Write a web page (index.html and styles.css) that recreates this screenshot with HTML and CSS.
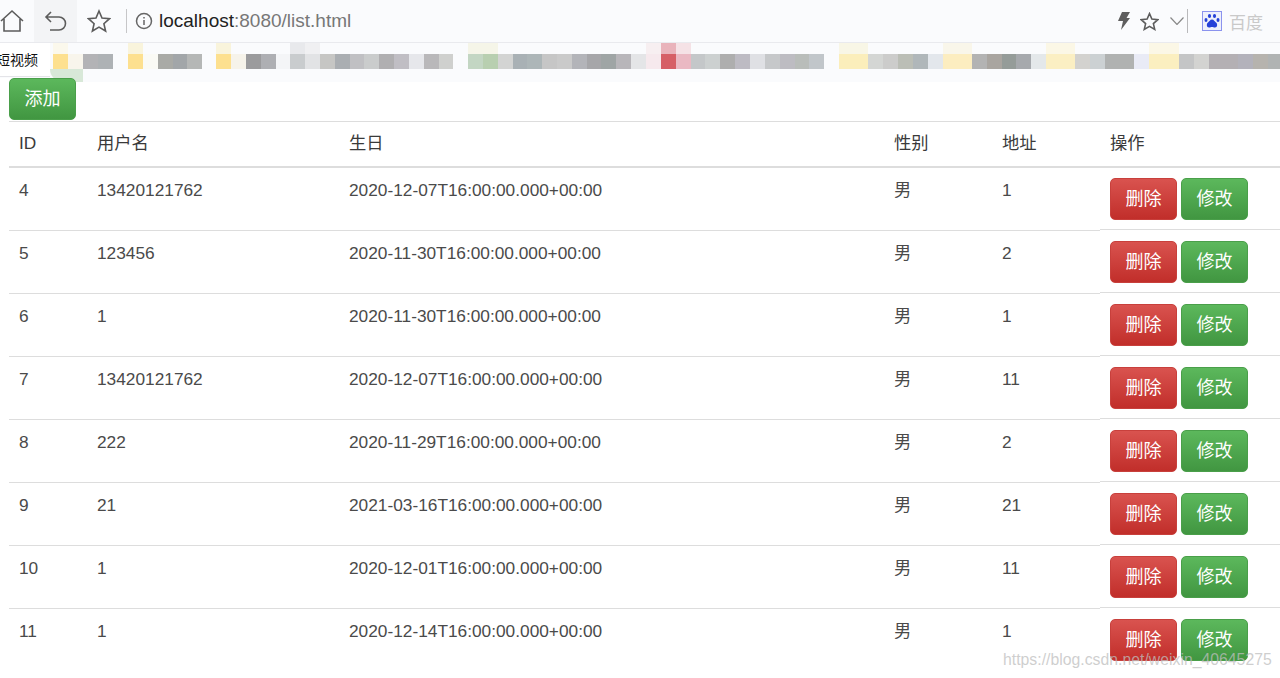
FILE: index.html
```html
<!DOCTYPE html>
<html lang="en">
<head>
    <meta charset="UTF-8">
    <meta name="viewport" content="width=device-width, initial-scale=1.0">
    <title>list</title>
    <link rel="stylesheet" href="styles.css">
</head>
<body>
    <header class="toolbar">
        <svg class="icon home" viewBox="0 0 24 24"><path d="M1 12 12 2l11 10M4 10v12h16V10"/></svg>
        <div class="back-box">
            <svg class="icon" viewBox="0 0 24 24"><path d="M7 3 2 8l5 5M2 8h13a6.500 6.500 0 0 1 0 13H6"/></svg>
        </div>
        <svg class="icon star" viewBox="0 0 24 24"><path d="m12 2 3 7 7.500.7-5.600 5 1.700 7.300-6.600-3.900L5.400 22l1.700-7.300-5.600-5L9 9z"/></svg>
        <span class="divider"></span>
        <svg class="info" viewBox="0 0 18 18"><circle cx="9" cy="9" r="7.500"/><path d="M9 8v5M9 5v1.600"/></svg>
        <div class="url">localhost<span class="url-rest">:8080/list.html</span></div>
        <svg class="bolt" viewBox="0 0 12 18"><path d="M4 0h8L8.500 6H12L3 18l2-9H0z"/></svg>
        <svg class="icon star-small" viewBox="0 0 24 24"><path d="m12 2 3 7 7.500.7-5.600 5 1.700 7.300-6.600-3.900L5.400 22l1.700-7.300-5.600-5L9 9z"/></svg>
        <svg class="chevron" viewBox="0 0 14 8"><path d="m.5.500 6.500 7 6.500-7"/></svg>
        <span class="divider divider-right"></span>
        <svg class="baidu" viewBox="0 0 20 20">
            <rect x=".5" y=".5" width="19" height="19"/>
            <ellipse class="paw" cx="7.500" cy="5" rx="1.600" ry="2.100"/>
            <ellipse class="paw" cx="12.500" cy="5" rx="1.600" ry="2.100"/>
            <ellipse class="paw" cx="4" cy="9" rx="1.500" ry="2"/>
            <ellipse class="paw" cx="16" cy="9" rx="1.500" ry="2"/>
            <path class="paw" d="M10 8.500c2 0 2.500 2 4 3 1.800 1.300 1.500 5-1 5-1.300 0-2-.5-3-.5s-1.700.5-3 .5c-2.500 0-2.800-3.700-1-5 1.500-1 2-3 4-3z"/>
        </svg>
        <span class="search-name">百度</span>
    </header>

    <div class="bookmarks">
        <span class="bm-label">短视频</span>
    </div>

    <main class="page">
        <button class="btn btn-green btn-add">添加</button>
        <table class="list">
            <thead>
                <tr>
                    <th class="col-id">ID</th>
                    <th class="col-name">用户名</th>
                    <th class="col-birth">生日</th>
                    <th class="col-sex">性别</th>
                    <th class="col-addr">地址</th>
                    <th>操作</th>
                </tr>
            </thead>
            <tbody>
                <tr>
                    <td>4</td><td>13420121762</td><td>2020-12-07T16:00:00.000+00:00</td><td>男</td><td>1</td>
                    <td class="ops"><div class="ops-btns"><button class="btn btn-red">删除</button><button class="btn btn-green">修改</button></div></td>
                </tr>
                <tr>
                    <td>5</td><td>123456</td><td>2020-11-30T16:00:00.000+00:00</td><td>男</td><td>2</td>
                    <td class="ops"><div class="ops-btns"><button class="btn btn-red">删除</button><button class="btn btn-green">修改</button></div></td>
                </tr>
                <tr>
                    <td>6</td><td>1</td><td>2020-11-30T16:00:00.000+00:00</td><td>男</td><td>1</td>
                    <td class="ops"><div class="ops-btns"><button class="btn btn-red">删除</button><button class="btn btn-green">修改</button></div></td>
                </tr>
                <tr>
                    <td>7</td><td>13420121762</td><td>2020-12-07T16:00:00.000+00:00</td><td>男</td><td>11</td>
                    <td class="ops"><div class="ops-btns"><button class="btn btn-red">删除</button><button class="btn btn-green">修改</button></div></td>
                </tr>
                <tr>
                    <td>8</td><td>222</td><td>2020-11-29T16:00:00.000+00:00</td><td>男</td><td>2</td>
                    <td class="ops"><div class="ops-btns"><button class="btn btn-red">删除</button><button class="btn btn-green">修改</button></div></td>
                </tr>
                <tr>
                    <td>9</td><td>21</td><td>2021-03-16T16:00:00.000+00:00</td><td>男</td><td>21</td>
                    <td class="ops"><div class="ops-btns"><button class="btn btn-red">删除</button><button class="btn btn-green">修改</button></div></td>
                </tr>
                <tr>
                    <td>10</td><td>1</td><td>2020-12-01T16:00:00.000+00:00</td><td>男</td><td>11</td>
                    <td class="ops"><div class="ops-btns"><button class="btn btn-red">删除</button><button class="btn btn-green">修改</button></div></td>
                </tr>
                <tr class="row-last">
                    <td>11</td><td>1</td><td>2020-12-14T16:00:00.000+00:00</td><td>男</td><td>1</td>
                    <td class="ops"><div class="ops-btns"><button class="btn btn-red">删除</button><button class="btn btn-green">修改</button></div></td>
                </tr>
            </tbody>
        </table>
    </main>

    <div class="watermark">https://blog.csdn.net/weixin_40645275</div>
</body>
</html>
```

FILE: styles.css
```css
html, body {
    height: 100%;
}
body {
    position: relative;
    margin: 0;
    overflow: hidden;
    background: #fff;
    color: #4a4a4a;
    font-family: "Liberation Sans", "Noto Sans CJK SC", sans-serif;
    font-size: 17.300px;
}

/* browser toolbar */
.toolbar {
    display: flex;
    align-items: center;
    height: 43px;
    background: #fafbfd;
    border-bottom: 1px solid #e9eaee;
    box-sizing: border-box;
}
.icon {
    flex: none;
    width: 24px;
    height: 24px;
    fill: none;
    stroke: #5c5c5c;
    stroke-width: 1.600;
}
.home {
    margin-right: 10px;
}
.back-box {
    display: flex;
    align-items: center;
    justify-content: center;
    width: 43px;
    height: 42px;
    background: #f3f4f6;
}
.star {
    margin-left: 10px;
}
.divider {
    width: 1px;
    height: 24px;
    margin-left: 15px;
    background: #c6c6c8;
}
.info {
    flex: none;
    width: 18px;
    height: 18px;
    margin-left: 8px;
    fill: none;
    stroke: #666;
    stroke-width: 1.500;
}
.url {
    margin-left: 6px;
    color: #222;
    font-size: 19px;
    white-space: nowrap;
}
.url-rest {
    color: #777;
}
.bolt {
    width: 12px;
    height: 18px;
    margin-left: auto;
    fill: #5e5e5e;
}
.star-small {
    width: 19px;
    height: 19px;
    margin-left: 10px;
    stroke-width: 2;
}
.chevron {
    width: 14px;
    height: 8px;
    margin-left: 11px;
    fill: none;
    stroke: #888;
    stroke-width: 1.200;
}
.divider-right {
    margin-left: 3px;
    background: #b9b9bb;
}
.baidu {
    flex: none;
    width: 20px;
    height: 20px;
    margin-left: 14px;
}
.baidu rect {
    fill: #eef0fb;
    stroke: #8b93ee;
}
.paw {
    fill: #2440d8;
}
.search-name {
    margin: 0 17px 0 7px;
    color: #c9c9c9;
    font-size: 17px;
}

/* bookmarks, names are pixelated in the shot */
.bookmarks {
    position: relative;
    display: flex;
    height: 35px;
    box-sizing: border-box;
    border-bottom: 1px solid #fafbfd;
    background-color: #fafbfd;
    background-repeat: no-repeat;
    background-size: 100% 15px, 100% 11px;
    background-position: 0 11px, 0 0;
    background-image:
        linear-gradient(to right, transparent 53px,
            #fde08f 53px 68px, #f8f5ec 68px 83px, #b3b3b6 83px 98px, #aeb2b5 98px 113px, transparent 113px 128px,
            #fde08f 128px 143px, #fafaf5 143px 158px, #a9aaa6 158px 173px, #a2a6a9 173px 187px, #b5b7b6 187px 202px, transparent 202px 216px,
            #fde08f 216px 231px, #f6f3ea 231px 246px, #9b9b9d 246px 261px, #aeafb3 261px 276px, #f4f5f7 276px 290px,
            #c9ccce 290px 305px, #e2e3e5 305px 320px, #c6c6c4 320px 335px, #aaaeb2 335px 350px, #c0c0c3 350px 364px, #cacccc 364px 379px,
            #b0afb1 379px 394px, #c0bec4 394px 409px, #e6e7eb 409px 424px, #b9b8ba 424px 439px, #cfd0ce 439px 453px, transparent 453px 468px,
            #c3d6c3 468px 483px, #b8cfb0 483px 498px, #d3d4d3 498px 513px, #a9b1b5 513px 527px, #adb6b8 527px 542px, #c6c6c6 542px 557px,
            #cacaca 557px 572px, #b3b4b9 572px 587px, #a6a6a9 587px 601px, #9fa5a5 601px 616px, #b8b6ba 616px 631px, #e4e5e7 631px 646px,
            #f6e9ed 646px 661px, #d65f66 661px 676px, #eab9c3 676px 691px, #c4c7c9 691px 705px, #ccd0d0 705px 720px, #aeaeae 720px 735px,
            #bdbbc3 735px 750px, #dfe0e4 750px 765px, #c6c8ca 765px 780px, #bdbcc2 780px 795px, #b9bdba 795px 809px, #c1c6ca 809px 824px,
            transparent 824px 839px, #fbeebb 839px 868px, #d4d6d4 868px 883px, #cccccb 883px 898px, #bbbeb6 898px 913px, #b0b7ba 913px 928px,
            #e3e7ec 928px 943px, #fcedc0 943px 972px, #b3b3b3 972px 987px, #a9a5a0 987px 1002px, #959c99 1002px 1016px, #a6a9ad 1016px 1031px,
            #e4e8ea 1031px 1046px, #fbefc3 1046px 1075px, #d3d2cf 1075px 1090px, #ccd1d3 1090px 1105px, #b0b2b1 1105px 1134px, #e9ebf6 1134px 1149px,
            #fbefc0 1149px 1179px, #c4c5c6 1179px 1194px, #d3d3d1 1194px 1209px, #b4b0b4 1209px 1238px, #b3b2bb 1238px 1253px, #b6b3ae 1253px 1268px,
            #b0b3b3 1268px 1280px),
        linear-gradient(to right, transparent 53px,
            #fbf8ec 53px 68px, transparent 68px 128px,
            #f9f4dc 128px 143px, transparent 143px 216px, #f9f4dc 216px 231px, transparent 231px 290px,
            #e8e9ec 290px 305px, #f0f0f2 305px 320px, transparent 320px 468px, #f5f5e8 468px 498px, transparent 498px 646px,
            #f7eff1 646px 661px, #e9b3bb 661px 676px, #f5e2e6 676px 691px, transparent 691px 839px,
            #f8f6e6 839px 868px, transparent 868px 943px, #f9f6ea 943px 972px, transparent 972px 1046px,
            #fbf7e6 1046px 1075px, transparent 1075px 1149px, #fbf7e6 1149px 1179px, transparent 1179px);
}
.bookmarks::before {
    content: "";
    position: absolute;
    left: 50px;
    top: 26px;
    width: 33px;
    height: 13px;
    background: #d8e8d8;
    border-bottom-left-radius: 22px;
}
.bookmarks::after {
    content: "";
    position: absolute;
    left: 83px;
    right: 0;
    top: 35px;
    height: 4px;
    background: #fafbfd;
}
.bm-label {
    width: 50px;
    height: 34px;
    padding-top: 9px;
    box-sizing: border-box;
    border-bottom: 1px solid #e4e4e8;
    background: #fff;
    color: #111;
    font-size: 14px;
    line-height: 17px;
    text-indent: -4px;
    white-space: nowrap;
}

/* page content */
.page {
    position: relative;
    padding-left: 9px;
}
.btn {
    display: block;
    width: 67px;
    height: 42px;
    padding: 0 0 5px;
    border: 1px solid transparent;
    border-radius: 5px;
    color: #fff;
    font-family: inherit;
    font-size: 18px;
    cursor: pointer;
}
.btn-green {
    background: linear-gradient(#5cb85c, #419641);
    border-color: #4a9f4a;
}
.btn-red {
    background: linear-gradient(#d9534f, #c12e2a);
    border-color: #c8403c;
}
.btn-add {
    margin-bottom: 1px;
}
.list {
    width: 1271px;
    table-layout: fixed;
    border-collapse: separate;
    border-spacing: 0;
    line-height: 24px;
}
.list th {
    height: 42px;
    padding: 0 10px 2px;
    box-sizing: content-box;
    border-top: 1px solid #ddd;
    border-bottom: 2px solid #ddd;
    color: #3a3a3a;
    font-weight: normal;
    text-align: left;
}
.list td {
    height: 52px;
    padding: 10px 10px 0;
    border-bottom: 1px solid #ddd;
    vertical-align: top;
}
.col-id { width: 58px; }
.col-name { width: 232px; }
.col-birth { width: 525px; }
.col-sex { width: 88px; }
.col-addr { width: 88px; }

.list td.ops {
    padding-top: 10px;
    padding-bottom: 0;
    border-bottom-color: transparent;
    background: linear-gradient(#ddd, #ddd) 0 100% / 100% 1px no-repeat;
    background-origin: padding-box;
}
.list .row-last td {
    border-bottom-color: transparent;
}
.list .row-last td.ops {
    background: none;
}
.ops-btns {
    display: flex;
    gap: 4px;
}
.watermark {
    position: absolute;
    left: 1003px;
    top: 650px;
    color: rgba(190, 190, 190, 0.75);
    font-size: 15.800px;
    line-height: 20px;
    white-space: nowrap;
}
```
